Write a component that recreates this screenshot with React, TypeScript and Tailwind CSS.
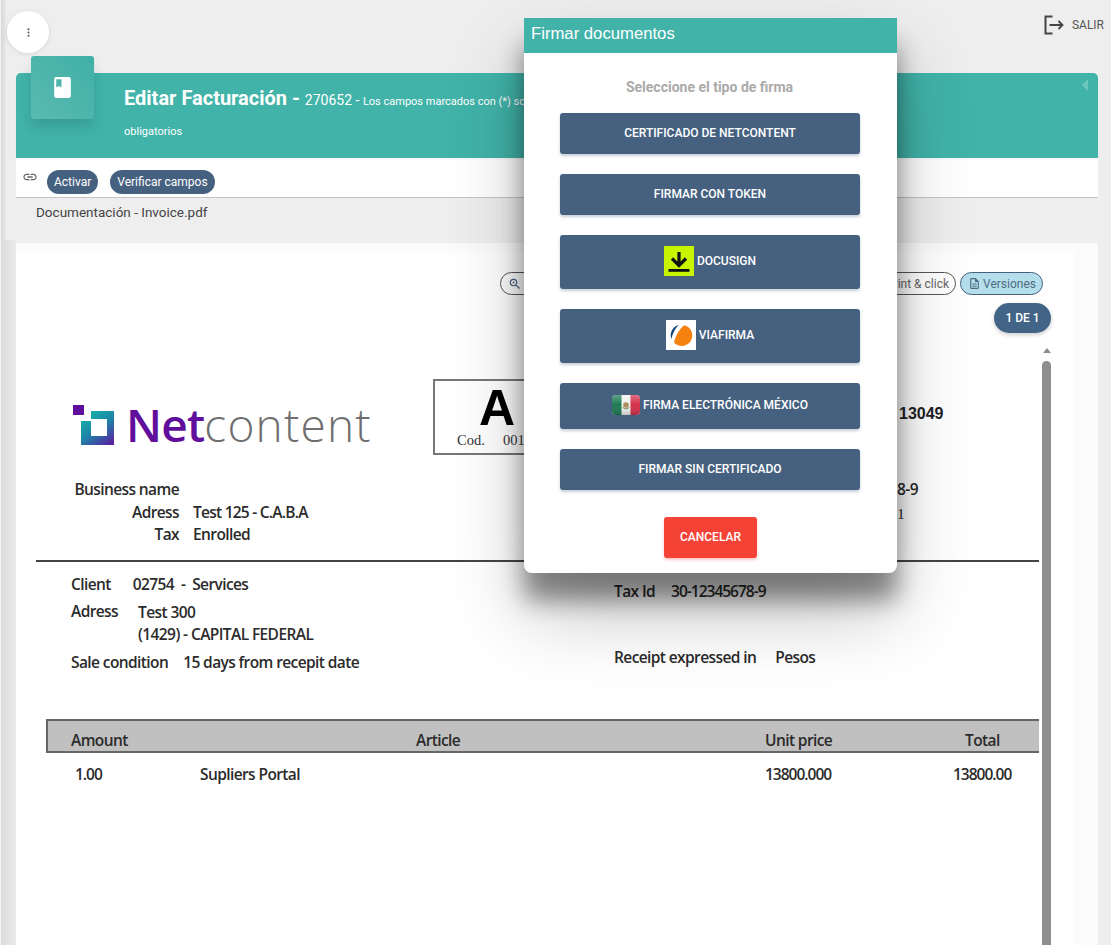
import React from "react";
import { MdBook, MdMoreVert, MdLink, MdZoomIn, MdOutlineDescription } from "react-icons/md";

const sans = "font-['Roboto',sans-serif]";
const docFont = "font-['Open_Sans',sans-serif] font-semibold text-[15.5px] leading-[22.5px] tracking-[-0.6px] text-[#2b2b2b]";
const digits = "tracking-[-1px]";

function SignButton({ h, children }: { h: string; children: React.ReactNode }) {
  return (
    <button className={`${h} w-[300px] rounded-[3px] bg-[#46617f] text-white text-[12px] font-medium uppercase flex items-center justify-center gap-[3px] pb-[2px] shadow-[0_2px_3px_rgba(70,97,127,0.3)]`}>
      {children}
    </button>
  );
}

function DocusignIcon() {
  return (
    <svg viewBox="0 0 30 30" className="w-[30px] h-[30px]">
      <rect width="30" height="30" fill="#c8f400" />
      <path d="M15 6v13.5M8 12.5l7 7 7-7" fill="none" stroke="#111" strokeWidth="3.2" />
      <rect x="4.5" y="23" width="21" height="2.8" fill="#111" />
    </svg>
  );
}

function ViafirmaIcon() {
  return (
    <svg viewBox="0 0 30 30" className="w-[30px] h-[30px]">
      <rect width="30" height="30" fill="#fff" />
      <path d="M12.5 5 A10.5 10.5 0 0 0 5.5 19 C6.5 13.5 9 9 12.5 5 Z" fill="#14477c" />
      <path d="M18 5.2 A10.5 10.5 0 1 1 8 22.5 C10 15 13 9.5 18 5.2 Z" fill="#f5820f" />
    </svg>
  );
}

function FlagIcon() {
  return (
    <svg viewBox="0 0 28 20" className="w-[28px] h-[20px]">
      <defs>
        <linearGradient id="gloss" x1="0" y1="0" x2="0" y2="1">
          <stop offset="0" stopColor="#fff" stopOpacity="0.3" />
          <stop offset="0.5" stopColor="#fff" stopOpacity="0" />
          <stop offset="1" stopColor="#000" stopOpacity="0.2" />
        </linearGradient>
      </defs>
      <rect width="28" height="20" rx="4" fill="#f1f1ee" />
      <path d="M4 0h5.5v20H4a4 4 0 0 1-4-4V4a4 4 0 0 1 4-4z" fill="#1d7a52" />
      <path d="M18.5 0H24a4 4 0 0 1 4 4v12a4 4 0 0 1-4 4h-5.5z" fill="#d32f4a" />
      <circle cx="14" cy="10" r="2.8" fill="#a98c5b" />
      <path d="M10.5 12.5q3.5 3 7 0" fill="none" stroke="#6b8e4e" strokeWidth="1" />
      <rect width="28" height="20" rx="4" fill="url(#gloss)" />
    </svg>
  );
}

function Logo() {
  return (
    <div className="flex items-end">
      <svg viewBox="0 0 41 41" className="w-[41px] h-[41px] mr-[12px] mb-[1px]">
        <defs>
          <linearGradient id="lg" x1="0.2" y1="0" x2="0.9" y2="1">
            <stop offset="0" stopColor="#12b5a5" />
            <stop offset="0.5" stopColor="#1e83a8" />
            <stop offset="1" stopColor="#5a1fa0" />
          </linearGradient>
        </defs>
        <rect x="0" y="0" width="11" height="10" fill="#5f0f9c" />
        <path d="M18 6H41V40H8V16H18V31H34V14H18Z" fill="url(#lg)" />
      </svg>
      <span className="font-['Open_Sans',sans-serif] text-[46px] leading-[46px]">
        <span className="font-semibold text-[#5f0f9c] tracking-[-0.8px]">Net</span>
        <span className="font-light text-[#6f6f6f] tracking-[1.2px]">content</span>
      </span>
    </div>
  );
}

export default function App() {
  return (
    <div className={`relative w-[1111px] h-[945px] overflow-hidden bg-[#eeeeee] ${sans}`}>
      <div className="absolute left-0 top-0 bottom-0 w-[7px] border-l border-[#f4f4f4] bg-gradient-to-r from-[#d6d6d6] to-[#eeeeee]" />
      <div className="absolute left-0 top-[240px] bottom-0 w-[16px] border-l border-[#f4f4f4] bg-gradient-to-r from-[#dadada] to-[#ececec]" />

      <div className="relative flex flex-col h-full pl-[16px] pr-[13px]">
        {/* top bar */}
        <div className="h-[73px] flex justify-end pt-[13px] shrink-0">
          <div className="flex items-start gap-[8px] mr-[-6px] text-[#555] text-[12px]">
            <svg viewBox="0 0 20 20" className="w-[20px] h-[20px] mt-[2px]" fill="none" stroke="#444" strokeWidth="2">
              <path d="M8.5 1.5H1.5v17h7" />
              <path d="M5.5 10h13M14.5 6l4 4-4 4" strokeWidth="1.8" />
            </svg>
            <span className="mt-[3px]">SALIR</span>
          </div>
        </div>

        {/* header */}
        <div className="relative h-[85px] shrink-0 rounded-t-[5px] bg-[#41b3a9] text-white pl-[108px] shadow-[0_1px_2px_rgba(0,0,0,0.05)]">
          <div className="leading-[20px] pt-[15px] whitespace-nowrap">
            <span className="text-[20px] font-bold">Editar Facturación - </span>
            <span className="text-[14px]">270652</span>
            <span className="text-[14px]"> - </span>
            <span className="text-[11px]">Los campos marcados con (*) son</span>
          </div>
          <div className="text-[11px] leading-[14px] mt-[13px]">obligatorios</div>
          <div className="absolute right-[10px] top-[6px] w-0 h-0 border-y-[6px] border-y-transparent border-r-[6px] border-r-[#6cc6be]" />
        </div>

        {/* actions */}
        <div className="h-[40px] shrink-0 bg-white border-b border-[#c4c4c4] flex items-start pl-[6px]">
          <MdLink className="text-[#666] w-[16px] h-[16px] mt-[11px]" />
          <button className="ml-[9px] mt-[12px] h-[24px] px-[7px] rounded-full bg-[#46617f] text-white text-[12px]">Activar</button>
          <button className="ml-[12px] mt-[12px] h-[24px] px-[7px] rounded-full bg-[#46617f] text-white text-[12px]">Verificar campos</button>
        </div>

        <div className="h-[45px] shrink-0 pl-[20px] pt-[4px] text-[13.5px] leading-[20px] text-[#444]">Documentación - Invoice.pdf</div>

        {/* card */}
        <div className="flex-1 min-h-0 bg-[#fbfbfb] pt-[9px] pr-[24px]">
          <div className="h-full bg-white flex flex-col">
            {/* toolbar */}
            <div className="h-[23px] mt-[20px] shrink-0 flex justify-end gap-[4px] pr-[31px] text-[12px] text-[#666]">
              <div className="w-[375px] rounded-full border border-[#555] flex items-center pl-[7px]">
                <MdZoomIn className="w-[14px] h-[14px] text-[#46617f]" />
              </div>
              <div className="rounded-full border border-[#555] flex items-center px-[6px] whitespace-nowrap">Print &amp; click</div>
              <div className="rounded-full border border-[#46617f] bg-[#b5deec] text-[#4e6b80] flex items-center gap-[2px] pl-[7px] pr-[6px] whitespace-nowrap">
                <MdOutlineDescription className="w-[13px] h-[13px]" />Versiones
              </div>
            </div>
            <div className="h-[30px] mt-[8px] shrink-0 flex justify-end pr-[23px]">
              <div className="w-[57px] rounded-full bg-[#416487] text-white text-[12px] font-medium flex items-center justify-center shadow-[0_2px_4px_rgba(0,0,0,0.2)]">1 DE 1</div>
            </div>

            <div className="flex-1 min-h-0 flex mt-[12px] pl-[20px]">
              {/* document */}
              <div className="w-[1003px] shrink-0 flex flex-col">
                <div className="flex h-[76px] mt-[34px] shrink-0">
                  <div className="w-[397px] pl-[37px] pt-[22px] shrink-0"><Logo /></div>
                  <div className="w-[200px] shrink-0 border-y-2 border-l-2 border-[#777] flex flex-col pl-[22px] pt-[4px]">
                    <span className="pl-[22px] font-['Liberation_Sans',sans-serif] font-bold text-[50px] leading-[47px] text-black">A</span>
                    <span className="font-['Liberation_Serif',serif] text-[14.5px] leading-[16px] text-[#333] whitespace-pre">Cod.     001</span>
                  </div>
                  <div className="flex-1 pl-[266px] pt-[25px] font-['Liberation_Sans',sans-serif] font-bold text-[16px] leading-[20px] text-[#222]">13049</div>
                </div>

                <div className="flex mt-[23px] h-[84px] shrink-0 border-b-2 border-[#444]">
                  <div className={`grid grid-cols-[105px_auto] gap-x-[14px] ml-[38px] w-[400px] content-start ${docFont}`}>
                    <span className="text-right whitespace-nowrap">Business name</span><span />
                    <span className="text-right">Adress</span><span className="tracking-[-0.75px]">Test 125 - C.A.B.A</span>
                    <span className="text-right">Tax</span><span>Enrolled</span>
                  </div>
                  <div className={`ml-[423px] ${docFont} flex flex-col gap-[2px]`}>
                    <span>8-9</span>
                    <span className="font-['Liberation_Serif',serif] font-normal">1</span>
                  </div>
                </div>

                <div className="flex h-[157px] shrink-0">
                  <div className={`ml-[35px] w-[543px] pt-[11px] ${docFont}`}>
                    <div className="flex gap-[22px]"><span>Client</span><span>02754 &nbsp;- &nbsp;Services</span></div>
                    <div className="flex gap-[20px] mt-[4px]"><span>Adress</span><div className="mt-[1px]"><div>Test 300</div><div>(1429) - CAPITAL FEDERAL</div></div></div>
                    <div className="flex gap-[15px] mt-[5px]"><span>Sale condition</span><span>15 days from recepit date</span></div>
                  </div>
                  <div className={`pt-[18px] ${docFont}`}>
                    <div className="flex gap-[16px]"><span>Tax Id</span><span className={digits}>30-12345678-9</span></div>
                    <div className="flex gap-[19px] mt-[43px]"><span>Receipt expressed in</span><span>Pesos</span></div>
                  </div>
                </div>

                <div className={`ml-[10px] h-[34px] shrink-0 bg-[#c0c0c0] border-y-2 border-l-2 border-[#666] grid grid-cols-[345px_349px_200px_auto] items-center pl-[23px] pt-[8px] ${docFont}`}>
                  <span>Amount</span><span>Article</span><span>Unit price</span><span>Total</span>
                </div>
                <div className={`ml-[39px] mt-[10px] grid grid-cols-[125px_565px_188px_auto] ${docFont}`}>
                  <span className={digits}>1.00</span><span>Supliers Portal</span><span className={digits}>13800.000</span><span className={digits}>13800.00</span>
                </div>
              </div>

              {/* scrollbar */}
              <div className="w-[9px] ml-[3px] flex flex-col items-center">
                <div className="w-0 h-0 mt-[3px] border-x-[4px] border-x-transparent border-b-[5px] border-b-[#8c8c8c]" />
                <div className="flex-1 w-[9px] mt-[8px] rounded-t-full bg-[#8e8e8e]" />
              </div>
            </div>
          </div>
        </div>
      </div>

      {/* floating menu */}
      <button className="absolute left-[7px] top-[11px] w-[42px] h-[42px] rounded-full bg-white flex items-center justify-center shadow-[0_1px_5px_rgba(0,0,0,0.1)]">
        <MdMoreVert className="w-[13px] h-[13px] text-[#666]" />
      </button>

      {/* header icon tile */}
      <div className="absolute left-[31px] top-[56px] w-[63px] h-[63px] rounded-[3px] bg-gradient-to-tr from-[#5abab1] to-[#3fb0a6] flex items-center justify-center shadow-[0_8px_12px_rgba(0,0,0,0.12)]">
        <MdBook className="w-[25px] h-[25px] text-white" />
      </div>

      {/* modal */}
      <div className="absolute left-[524px] top-[18px] w-[373px] h-[555px] bg-white rounded-b-[8px] flex flex-col items-center shadow-[0_27px_24px_rgba(0,0,0,0.42),0_40px_77px_rgba(0,0,0,0.24)]">
        <div className="w-full h-[35px] bg-[#41b3a9] text-white text-[16.7px] leading-[31px] pl-[7px] font-['Liberation_Sans',sans-serif]">Firmar documentos</div>
        <div className="mt-[24px] pr-[2px] text-[14px] leading-[20px] font-bold text-[#aaaaaa]">Seleccione el tipo de firma</div>
        <div className="mt-[16px] self-start ml-[36px] flex flex-col gap-[20px] items-center">
          <SignButton h="h-[41px]">Certificado de NetContent</SignButton>
          <SignButton h="h-[41px]">Firmar con Token</SignButton>
          <SignButton h="h-[54px]"><DocusignIcon /><span>DocuSign</span></SignButton>
          <SignButton h="h-[54px]"><ViafirmaIcon /><span>Viafirma</span></SignButton>
          <SignButton h="h-[46px]"><FlagIcon /><span>Firma electrónica México</span></SignButton>
          <SignButton h="h-[41px]">Firmar sin certificado</SignButton>
        </div>
        <button className="mt-[27px] w-[93px] h-[41px] pb-[2px] rounded-[3px] bg-[#f44336] text-white text-[12px] font-medium shadow-[0_2px_3px_rgba(244,67,54,0.3)]">CANCELAR</button>
      </div>
    </div>
  );
}
